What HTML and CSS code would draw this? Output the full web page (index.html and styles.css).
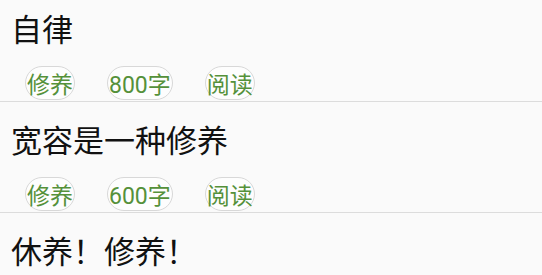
FILE: index.html
```html
<!DOCTYPE html>
<html lang="zh-CN">
<head>
<meta charset="utf-8">
<title>文章列表</title>
<link rel="stylesheet" href="styles.css">
</head>
<body>
<ul class="list">
  <li class="item">
    <div class="title">自律</div>
    <div class="tags">
      <span class="tag">修养</span>
      <span class="tag">800字</span>
      <span class="tag">阅读</span>
    </div>
  </li>
  <li class="item">
    <div class="title">宽容是一种修养</div>
    <div class="tags">
      <span class="tag">修养</span>
      <span class="tag">600字</span>
      <span class="tag">阅读</span>
    </div>
  </li>
  <li class="item">
    <div class="title">休养！修养！</div>
  </li>
</ul>
</body>
</html>
```
FILE: styles.css
```css
html, body {
  margin: 0;
  padding: 0;
  background: #fafafa;
  overflow: hidden;
}
body {
  font-family: Roboto, "Noto Sans CJK SC", sans-serif;
}
.list {
  list-style: none;
  margin: -9px 0 0 0;
  padding: 0;
}
.item {
  padding: 20px 0 1px 0;
  border-bottom: 1px solid #dcdcdc;
}
.item:last-child {
  border-bottom: none;
}
.title {
  padding-left: 11px;
  font-size: 31px;
  line-height: 40px;
  color: #111;
}
.tags {
  display: flex;
  gap: 32px;
  margin-top: 15px;
  padding-left: 25px;
}
.tag {
  display: flex;
  align-items: center;
  height: 32px;
  padding: 0 1px;
  border: 1px solid #d8d8d8;
  border-radius: 17px;
  font-size: 23px;
  color: #55913a;
  background: #fdfdfd;
}
```
